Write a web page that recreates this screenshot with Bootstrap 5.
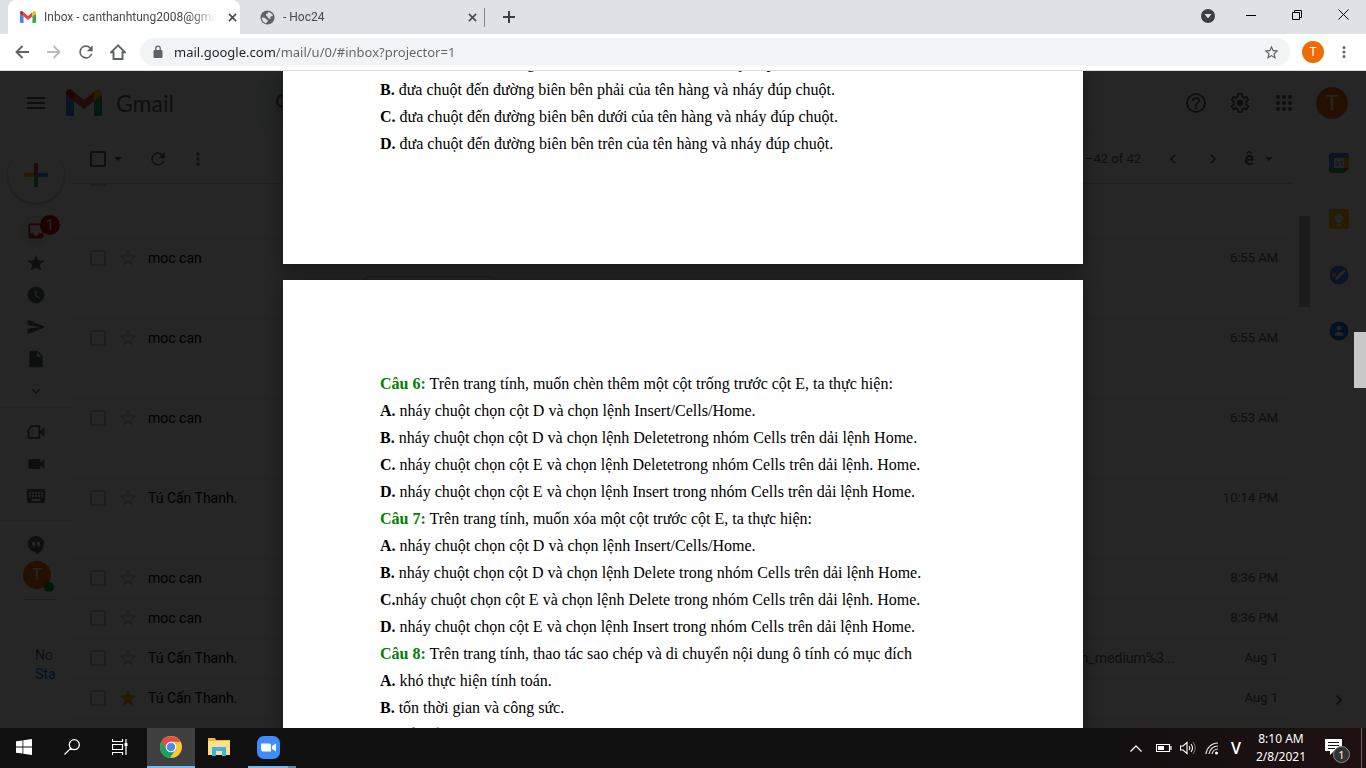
<!DOCTYPE html>
<html lang="vi">
<head>
<meta charset="utf-8">
<meta name="viewport" content="width=device-width, initial-scale=1">
<title>Inbox - Gmail</title>
<link rel="stylesheet" href="https://cdn.jsdelivr.net/npm/bootstrap@5.3.0/dist/css/bootstrap.min.css">
<style>
  body { font-family: "Open Sans", "Noto Sans", sans-serif; font-size: 12px; line-height: 16px; color: #202124; }
  button { border: 0; background: none; padding: 0; color: inherit; }
  svg { display: block; flex: none; }
  .icon-cell { display: flex; align-items: center; justify-content: center; flex: none; width: 32px; height: 32px; }

  /* browser frame */
  .tab-strip { height: 34px; background: #dee1e6; padding-left: 8px; }
  .browser-tab { width: 232px; padding: 0 0 0 12px; gap: 8px; color: #45494d; font-family: Roboto, sans-serif; }
  .browser-tab.is-open { background: #fff; border-radius: 8px 8px 0 0; }
  .tab-title { flex: 1; min-width: 0; overflow: hidden; white-space: nowrap; -webkit-mask-image: linear-gradient(to right, #000 85%, transparent); }
  .tab-close { width: 16px; height: 16px; display: grid; place-items: center; }
  .tab-rule { width: 1px; height: 19px; background: #80868b; }
  .window-btn { width: 46px; height: 29px; display: grid; place-items: center; }
  .tool-row { height: 37px; padding: 0 6px; border-bottom: 1px solid #dadce0; background: #fff; color: #5f6368; }
  .omnibox { height: 28px; background: #f1f3f4; border-radius: 14px; padding: 0 10px; margin: 0 12px 0 6px; }
  .omnibox input { border: 0; outline: 0; padding: 0; font-size: 13px; font-family: "Noto Sans", sans-serif; color: #5f6368;
    background: linear-gradient(to right, #202124 102px, #5f6368 102px); -webkit-background-clip: text; -webkit-text-fill-color: transparent; }
  .user-dot { display: grid; place-items: center; flex: none; border-radius: 50%; background: #ef6c00; color: #fff; font-family: Roboto, sans-serif; }
  .dot-small { width: 22px; height: 22px; }
  .dot-large { width: 32px; height: 32px; font-size: 20px; }

  /* mail behind the viewer */
  .mail { font-family: Roboto, sans-serif; background: #fff; color: #5f6368; }
  .mail-head { height: 64px; border-bottom: 1px solid #eceff1; padding-right: 18px; }
  .menu-cell { width: 72px; height: 48px; display: grid; place-items: center; flex: none; }
  .mail-brand { width: 190px; margin-left: -6px; gap: 14px; flex: none; }
  .wordmark { font-family: Lato, sans-serif; font-size: 23px; line-height: 32px; color: #5f6368; }
  .mail-search { width: 720px; height: 48px; border-radius: 8px; background: #f1f3f4; padding-left: 20px; }
  .mail-search input { border: 0; background: none; }
  .mail-side { width: 72px; flex: none; }
  .compose { width: 56px; height: 56px; margin: 12px 8px; border-radius: 50%; display: grid; place-items: center; box-shadow: 0 1px 3px rgba(60,64,67,.5); }
  .side-item { width: 72px; height: 32px; display: grid; place-items: center; }
  .side-item.is-open span:first-child { width: 32px; height: 32px; border-radius: 50%; background: #fce8e6; display: grid; place-items: center; color: #c5221f; }
  .count-dot { left: 40px; top: 0; width: 20px; height: 20px; border-radius: 50%; background: #c5100c; color: #fff; font-size: 14px; line-height: 20px; }
  .side-rule { border-top: 1px solid #e8eaed; margin-bottom: 8px; }
  .chat-user { width: 28px; height: 28px; margin-left: 23px; font-size: 16px; }
  .chat-dot { right: -3px; bottom: -3px; width: 10px; height: 10px; border-radius: 50%; background: #18a010; }
  .chat-rule { border-top: 1px solid #c4c7c9; margin: 10px 16px 0 23px; }
  .chat-note { margin: 46px 16px 0 35px; font-size: 14px; line-height: 19px; overflow: hidden; white-space: nowrap; }
  .list-tools { height: 48px; padding: 0 20px 0 18px; font-size: 13px; }
  .ime-btn { font-size: 18px; font-weight: 700; }
  .mail .form-check-input { width: 16px; height: 16px; margin: 0; border: 2px solid #c7c7c7; border-radius: 2px; background: none; flex: none; }
  .mail .list-tools .form-check-input { border-color: #5f6368; }
  .mail-rows { flex: 1; overflow: hidden; border-top: 1px solid #cfd8dc; }
  .mail-rows ul { margin: -25px 0 0; }
  .mail-row { height: 40px; padding: 11px 15px 0 18px; border-bottom: 1px solid #e6eaea; background: #f8faf9; font-size: 14px; line-height: 16px; }
  .mail-row.is-tall { height: 80px; }
  .mail-row svg { margin: -2px 0 0 12px; color: #c7c7c7; }
  .mail-row svg.is-starred { color: #f4b400; }
  .mail-row .sender { width: 209px; color: #000; margin-left: 10px; }
  .mail-row time { width: 103px; text-align: right; font-size: 13px; flex: none; }
  .file-chip { width: 147px; height: 32px; margin-top: 10px; border: 1px solid #bdc1c6; border-radius: 16px; }
  .mail-thumb { width: 11px; height: 91px; margin: 81px 0 0 6px; background: #b8b8b8; flex: none; }
  .app-rail { width: 56px; flex: none; border-left: 1px solid #eceff1; }
  .app-rail button { width: 56px; height: 56px; display: grid; place-items: center; }

  /* document viewer */
  .scrim { background: rgba(0,0,0,.85); }
  .sheet { width: 800px; max-width: 100%; background: #fff; color: #000; padding: 0 97px; font-family: "Liberation Serif", serif; font-size: 16px; line-height: 27px; box-shadow: 0 4px 15px 2px rgba(0,0,0,.35); }
  .sheet p { margin: 0; white-space: nowrap; }
  .sheet-first { height: 193px; flex: none; padding-bottom: 107px; overflow: hidden; display: flex; flex-direction: column; justify-content: flex-end; }
  .sheet-next { margin-top: 16px; padding-top: 90px; flex: 1; min-height: 0; overflow: hidden; }
  .ask { color: #008000; }
  .viewer-thumb { right: 0; top: 261px; width: 12px; height: 56px; background: #c8c8c8; }

  /* desktop taskbar */
  .taskbar { height: 40px; background: linear-gradient(to right, #101010 80%, #1f1012); color: #fff; flex: none; }
  .task { width: 48px; height: 40px; display: grid; place-items: center; border-bottom: 2px solid transparent; }
  .task-open { background: #404040; border-color: #76b9ed; margin-left: 3px; }
  .task-running { border-color: #76b9ed; width: 40px; margin-left: 5px; }
  .task-more { width: 8px; height: 40px; border-bottom: 2px solid #5b8bb2; }
  .ime-mark { font-size: 16px; font-weight: 600; }
  .clock { font-size: 12px; line-height: 18px; width: 56px; font-family: "Noto Sans", sans-serif; }
  .desk-edge { width: 5px; height: 40px; border-left: 1px solid #6b6062; }
  .notice-count { left: 24px; top: 18px; width: 17px; height: 17px; border: 1px solid #8a8a8a; border-radius: 50%; background: #333; font-size: 11px; line-height: 15px; }
</style>
<script src="https://cdn.jsdelivr.net/npm/bootstrap@5.3.0/dist/js/bootstrap.bundle.min.js"></script>
</head>
<body class="vh-100 d-flex flex-column overflow-hidden">

<svg width="0" height="0" class="position-absolute" aria-hidden="true">
  <defs>
    <symbol id="gmail" viewBox="0 0 36 27"><path fill="#4285f4" d="M0 6l8 5v16H2.500a2.500 2.500 0 0 1-2.500-2.500z"/><path fill="#34a853" d="M36 6l-8 5v16h5.500a2.500 2.500 0 0 0 2.500-2.500z"/><path fill="#ea4335" d="M8 3l10 8 10-8v9l-10 8-10-8z"/><path fill="#c5221f" d="M0 4C0 0 4-1 6.500 1.500L8 3v9L0 6z"/><path fill="#fbbc04" d="M36 4c0-4-4-5-6.500-2.500L28 3v9l8-6z"/></symbol>
    <symbol id="cross" viewBox="0 0 10 10"><path d="M1 1l8 8M9 1L1 9" stroke="currentColor" stroke-width="1.700"/></symbol>
    <symbol id="dots" viewBox="0 0 24 24"><path fill="currentColor" d="M12 8a2 2 0 1 0 0-4 2 2 0 0 0 0 4zm0 2a2 2 0 1 0 0 4 2 2 0 0 0 0-4zm0 6a2 2 0 1 0 0 4 2 2 0 0 0 0-4z"/></symbol>
    <symbol id="reload" viewBox="0 0 24 24"><path fill="currentColor" d="M17.650 6.350A8 8 0 1 0 19.730 14h-2.080A6 6 0 1 1 12 6c1.660 0 3.140.69 4.220 1.780L13 11h7V4z"/></symbol>
    <symbol id="star-line" viewBox="0 0 24 24"><path fill="currentColor" d="M22 9.240l-7.190-.62L12 2 9.190 8.630 2 9.240l5.460 4.730L5.820 21 12 17.270 18.180 21l-1.630-7.030zM12 15.400l-3.760 2.270 1-4.280-3.320-2.880 4.380-.38L12 6.100l1.710 4.040 4.380.38-3.320 2.880 1 4.280z"/></symbol>
    <symbol id="star-full" viewBox="0 0 24 24"><path fill="currentColor" d="M12 17.270L18.180 21l-1.640-7.030L22 9.240l-7.190-.61L12 2 9.190 8.630 2 9.240l5.460 4.730L5.820 21z"/></symbol>
    <symbol id="caret" viewBox="0 0 8 4"><path fill="currentColor" d="M0 0h8L4 4z"/></symbol>
    <symbol id="right" viewBox="0 0 24 24"><path fill="currentColor" d="M10 6L8.590 7.410 13.170 12l-4.580 4.590L10 18l6-6z"/></symbol>
    <symbol id="left" viewBox="0 0 24 24"><path fill="currentColor" d="M15.410 7.410L14 6l-6 6 6 6 1.410-1.410L10.830 12z"/></symbol>
  </defs>
</svg>

<header class="flex-shrink-0">
  <div class="tab-strip d-flex align-items-stretch">
    <div class="browser-tab is-open d-flex align-items-center">
      <svg width="16" height="12"><use href="#gmail"/></svg>
      <span class="tab-title">Inbox - canthanhtung2008@gma</span>
      <button class="tab-close" aria-label="Close tab"><svg width="9" height="9"><use href="#cross"/></svg></button>
    </div>
    <div class="browser-tab d-flex align-items-center ms-2 ps-2">
      <svg class="ms-1" width="15" height="15" viewBox="0 0 16 16"><circle cx="8" cy="8" r="7.500" fill="#5f6368"/><path fill="#dee1e6" d="M2 8c1.500 0 4 .2 4.500 1.500s2 .5 1.800 2-1.300 1.200-1.800 2.800C3.500 13.600 2 11 2 8zM9 2c2 .3 4 1.800 4.800 4-.8 1-2 .2-2.500 1-1 1.200.7 1.600 0 2.200-1.200.8-3-.8-3.300-1.700C7.700 6 6.300 6 6.200 5c0-1.200 2-.8 2.300-1.500S8.300 2.300 9 2z"/></svg>
      <span class="tab-title">- Hoc24</span>
      <button class="tab-close" aria-label="Close tab"><svg width="9" height="9"><use href="#cross"/></svg></button>
    </div>
    <span class="tab-rule align-self-center ms-1"></span>
    <button class="icon-cell align-self-center ms-2" aria-label="New tab"><svg width="12" height="12" viewBox="0 0 12 12"><path d="M6 0v12M0 6h12" stroke="#3c4043" stroke-width="2"/></svg></button>
    <div class="ms-auto d-flex">
      <button class="icon-cell me-1" aria-label="Search tabs"><svg width="14" height="14" viewBox="0 0 14 14"><circle cx="7" cy="7" r="7" fill="#3c4043"/><path fill="#dee1e6" d="M3.500 5h7L7 9.500z"/></svg></button>
      <button class="window-btn" aria-label="Minimize"><svg width="10" height="10"><path d="M0 5.500h10" stroke="#000"/></svg></button>
      <button class="window-btn" aria-label="Restore"><svg width="10" height="10" viewBox="0 0 10 10"><path d="M.5 2.500h7v7h-7zM2.500 2.500v-2h7v7h-2" fill="none" stroke="#000"/></svg></button>
      <button class="window-btn" aria-label="Close"><svg width="11" height="11" viewBox="0 0 11 11"><path d="M.5.500l10 10M10.500.500l-10 10" stroke="#000"/></svg></button>
    </div>
  </div>
  <div class="tool-row d-flex align-items-center">
    <button class="icon-cell" aria-label="Back"><svg width="14" height="14" viewBox="0 0 14 14"><path d="M14 7H2M7.500 1L1.500 7l6 6" fill="none" stroke="currentColor" stroke-width="1.900"/></svg></button>
    <button class="icon-cell" aria-label="Forward"><svg width="14" height="14" viewBox="0 0 14 14"><path d="M0 7h12M6.500 1l6 6-6 6" fill="none" stroke="#bababa" stroke-width="1.900"/></svg></button>
    <button class="icon-cell" aria-label="Reload"><svg width="20" height="20"><use href="#reload"/></svg></button>
    <button class="icon-cell" aria-label="Home"><svg width="16" height="16" viewBox="0 0 16 16"><path d="M8 1.300L1 8.300h2.500V15h9V8.300H15z" fill="none" stroke="currentColor" stroke-width="1.900"/></svg></button>
    <div class="omnibox d-flex align-items-center flex-grow-1">
      <svg width="16" height="14" viewBox="0 0 16 14"><path fill="#5f6368" d="M4.500 5h7a1 1 0 0 1 1 1v6a1 1 0 0 1-1 1h-7a1 1 0 0 1-1-1V6a1 1 0 0 1 1-1z"/><path d="M5.800 5.500V3.300a2.200 2.200 0 0 1 4.400 0v2.200" fill="none" stroke="#5f6368" stroke-width="1.300"/></svg>
      <input class="flex-grow-1 ms-2" type="text" aria-label="Address" value="mail.google.com/mail/u/0/#inbox?projector=1">
      <svg width="17" height="17"><use href="#star-line"/></svg>
    </div>
    <button class="user-dot dot-small" aria-label="Profile">T</button>
    <button class="icon-cell ms-1" aria-label="Menu"><svg width="18" height="18"><use href="#dots"/></svg></button>
  </div>
</header>

<main class="position-relative flex-grow-1 overflow-hidden d-flex flex-column">
  <div class="mail flex-grow-1 d-flex flex-column overflow-hidden">
    <div class="mail-head d-flex align-items-center">
      <button class="menu-cell" aria-label="Main menu"><svg width="18" height="12" viewBox="0 0 18 12"><path d="M0 1h18M0 6h18M0 11h18" stroke="currentColor" stroke-width="2"/></svg></button>
      <a class="mail-brand d-flex align-items-center text-decoration-none" href="#"><svg width="36" height="27"><use href="#gmail"/></svg><span class="wordmark">Gmail</span></a>
      <div class="mail-search d-flex align-items-center">
        <svg width="18" height="18" viewBox="0 0 18 18"><path d="M11.500 11.500L17 17M13 7A6 6 0 1 1 1 7a6 6 0 0 1 12 0z" fill="none" stroke="currentColor" stroke-width="2"/></svg>
        <input class="flex-grow-1" type="search" aria-label="Search mail">
      </div>
      <div class="d-flex align-items-center ms-auto">
        <button class="icon-cell me-2" aria-label="Help"><svg width="24" height="24" viewBox="0 0 24 24"><path fill="currentColor" d="M11 18h2v-2h-2zm1-16a10 10 0 1 0 0 20 10 10 0 0 0 0-20zm0 18a8 8 0 1 1 0-16 8 8 0 0 1 0 16zm0-14a4 4 0 0 0-4 4h2a2 2 0 1 1 4 0c0 2-3 1.750-3 5h2c0-2.250 3-2.500 3-5a4 4 0 0 0-4-4z"/></svg></button>
        <button class="icon-cell ms-1 me-2" aria-label="Settings"><svg width="24" height="24" viewBox="0 0 24 24"><path d="M10.200 3h3.600l.5 2.600 1.700 1 2.500-.9 1.800 3.100-2 1.800v2.800l2 1.800-1.800 3.100-2.500-.9-1.700 1-.5 2.600h-3.600l-.5-2.600-1.700-1-2.500.9-1.800-3.100 2-1.800v-2.800l-2-1.800 1.800-3.100 2.500.9 1.700-1z" fill="none" stroke="currentColor" stroke-width="2"/><circle cx="12" cy="12" r="3.300" fill="currentColor"/></svg></button>
        <button class="icon-cell ms-1 me-3" aria-label="Apps"><svg width="16" height="16" viewBox="0 0 16 16" fill="currentColor"><circle cx="2" cy="2" r="2"/><circle cx="8" cy="2" r="2"/><circle cx="14" cy="2" r="2"/><circle cx="2" cy="8" r="2"/><circle cx="8" cy="8" r="2"/><circle cx="14" cy="8" r="2"/><circle cx="2" cy="14" r="2"/><circle cx="8" cy="14" r="2"/><circle cx="14" cy="14" r="2"/></svg></button>
        <button class="user-dot dot-large" aria-label="Account">T</button>
      </div>
    </div>
    <div class="d-flex flex-grow-1 overflow-hidden">
      <nav class="mail-side" aria-label="Mail folders">
        <button class="compose" aria-label="Compose"><svg width="24" height="24" viewBox="0 0 24 24"><path fill="#ea4335" d="M10 0h4v10l-4 4z"/><path fill="#fbbc04" d="M0 10h10v4H0z"/><path fill="#34a853" d="M10 14l4-4v14h-4z"/><path fill="#4285f4" d="M14 10h10v4H12z"/></svg></button>
        <button class="side-item is-open position-relative" aria-label="Inbox"><span><svg width="20" height="20" viewBox="0 0 24 24"><path fill="currentColor" d="M19 3H5a2 2 0 0 0-2 2v14c0 1.100.9 2 2 2h14a2 2 0 0 0 2-2V5a2 2 0 0 0-2-2zm0 12h-4a3 3 0 0 1-6 0H5V5h14z"/></svg></span><span class="count-dot position-absolute">1</span></button>
        <button class="side-item" aria-label="Starred"><svg width="20" height="20"><use href="#star-full"/></svg></button>
        <button class="side-item" aria-label="Snoozed"><svg width="20" height="20" viewBox="0 0 24 24"><path fill="currentColor" fill-rule="evenodd" d="M12 2a10 10 0 1 0 0 20 10 10 0 0 0 0-20zm4.200 14.200L11 13V7h1.500v5.200l4.500 2.700z"/></svg></button>
        <button class="side-item" aria-label="Sent"><svg width="20" height="20" viewBox="0 0 24 24"><path fill="currentColor" d="M2 21l21-9L2 3v7l15 2-15 2z"/></svg></button>
        <button class="side-item" aria-label="Drafts"><svg width="20" height="20" viewBox="0 0 24 24"><path fill="currentColor" d="M6 2a2 2 0 0 0-2 2v16c0 1.100.9 2 2 2h12a2 2 0 0 0 2-2V8l-6-6zm7 7V3.500L18.500 9z"/></svg></button>
        <button class="side-item" aria-label="More"><svg width="18" height="18" viewBox="0 0 24 24"><path fill="currentColor" d="M7.400 8.600L12 13.200l4.600-4.600L18 10l-6 6-6-6z"/></svg></button>
        <div class="side-rule"></div>
        <button class="side-item" aria-label="New meeting"><svg width="20" height="20" viewBox="0 0 24 24"><path d="M7 5h9v14H3V9z" fill="none" stroke="currentColor" stroke-width="2"/><path fill="currentColor" d="M17 11l5-5v12l-5-5z"/></svg></button>
        <button class="side-item" aria-label="Join a meeting"><svg width="20" height="20" viewBox="0 0 24 24"><path fill="currentColor" d="M17 10.500V7a1 1 0 0 0-1-1H3v12h13a1 1 0 0 0 1-1v-3.500l5 4v-11z"/></svg></button>
        <button class="side-item" aria-label="Keyboard"><svg width="20" height="16" viewBox="0 0 20 16"><path fill="currentColor" d="M2 1h16a1 1 0 0 1 1 1v12a1 1 0 0 1-1 1H2a1 1 0 0 1-1-1V2a1 1 0 0 1 1-1z"/><path d="M3 5h14M3 8h14" stroke="#fff" stroke-width="2" stroke-dasharray="2 1"/><path d="M6 12h8" stroke="#fff" stroke-width="2"/></svg></button>
        <div class="side-rule mt-2"></div>
        <button class="side-item" aria-label="Hangouts"><svg width="20" height="20" viewBox="0 0 20 20"><path fill="currentColor" d="M10 1a8 8 0 0 0 0 16v3c3-1.500 8-6 8-11a8 8 0 0 0-8-8z"/><path fill="#fff" d="M6 7h3v3l-1 2H7v-2H6zm5 0h3v3l-1 2h-1v-2h-1z"/></svg></button>
        <button class="chat-user user-dot position-relative" aria-label="Chat account">T<span class="chat-dot position-absolute"></span></button>
        <div class="chat-rule"></div>
        <div class="chat-note"><div>No</div><a class="text-decoration-none" href="#">Star</a></div>
      </nav>

      <section class="flex-grow-1 d-flex flex-column overflow-hidden">
        <div class="list-tools d-flex align-items-center">
          <input class="form-check-input" type="checkbox" aria-label="Select all">
          <svg class="ms-2" width="8" height="4"><use href="#caret"/></svg>
          <button class="icon-cell ms-3 me-2 ps-2" aria-label="Refresh"><svg width="20" height="20"><use href="#reload"/></svg></button>
          <button class="icon-cell ms-1" aria-label="More actions"><svg width="20" height="20"><use href="#dots"/></svg></button>
          <span class="ms-auto me-3">1–42 of 42</span>
          <button class="icon-cell me-2" aria-label="Newer"><svg width="20" height="20"><use href="#left"/></svg></button>
          <button class="icon-cell me-1" aria-label="Older"><svg width="20" height="20"><use href="#right"/></svg></button>
          <button class="icon-cell ime-btn" aria-label="Input tools">ê</button>
          <svg width="8" height="4"><use href="#caret"/></svg>
        </div>
        <div class="mail-rows">
          <ul class="list-unstyled">
            <li class="mail-row is-tall d-flex"><input class="form-check-input" type="checkbox" aria-label="Select message"><svg width="20" height="20"><use href="#star-line"/></svg></li>
            <li class="mail-row is-tall d-flex"><input class="form-check-input" type="checkbox" aria-label="Select message"><svg width="20" height="20"><use href="#star-line"/></svg><span class="sender">moc can</span><span class="flex-grow-1"><span class="d-block">&nbsp;</span><span class="file-chip d-block"></span></span><time>6:55 AM</time></li>
            <li class="mail-row is-tall d-flex"><input class="form-check-input" type="checkbox" aria-label="Select message"><svg width="20" height="20"><use href="#star-line"/></svg><span class="sender">moc can</span><span class="flex-grow-1"></span><time>6:55 AM</time></li>
            <li class="mail-row is-tall d-flex"><input class="form-check-input" type="checkbox" aria-label="Select message"><svg width="20" height="20"><use href="#star-line"/></svg><span class="sender">moc can</span><span class="flex-grow-1"></span><time>6:53 AM</time></li>
            <li class="mail-row is-tall d-flex"><input class="form-check-input" type="checkbox" aria-label="Select message"><svg width="20" height="20"><use href="#star-line"/></svg><span class="sender">Tú Cấn Thanh.</span><span class="flex-grow-1"></span><time>10:14 PM</time></li>
            <li class="mail-row d-flex"><input class="form-check-input" type="checkbox" aria-label="Select message"><svg width="20" height="20"><use href="#star-line"/></svg><span class="sender">moc can</span><span class="flex-grow-1"></span><time>8:36 PM</time></li>
            <li class="mail-row d-flex"><input class="form-check-input" type="checkbox" aria-label="Select message"><svg width="20" height="20"><use href="#star-line"/></svg><span class="sender">moc can</span><span class="flex-grow-1"></span><time>8:36 PM</time></li>
            <li class="mail-row d-flex"><input class="form-check-input" type="checkbox" aria-label="Select message"><svg width="20" height="20"><use href="#star-line"/></svg><span class="sender">Tú Cấn Thanh.</span><span class="flex-grow-1 text-end">utm_medium%3...</span><time>Aug 1</time></li>
            <li class="mail-row d-flex"><input class="form-check-input" type="checkbox" aria-label="Select message"><svg class="is-starred" width="20" height="20"><use href="#star-full"/></svg><span class="sender">Tú Cấn Thanh.</span><span class="flex-grow-1"></span><time>Aug 1</time></li>
          </ul>
        </div>
      </section>
      <div class="mail-thumb"></div>
      <aside class="app-rail d-flex flex-column">
        <button aria-label="Calendar"><svg width="20" height="20" viewBox="0 0 20 20"><path fill="#4285f4" d="M0 2a2 2 0 0 1 2-2h16a2 2 0 0 1 2 2v3H5v11H0z"/><path fill="#fbbc04" d="M15 5h5v11h-5z"/><path fill="#34a853" d="M0 15h15v5H2a2 2 0 0 1-2-2z"/><path fill="#ea4335" d="M15 15h5l-5 5z"/><path fill="#fff" d="M5 5h10v10H5z"/><text x="10" y="13" font-size="8" font-weight="700" fill="#4285f4" text-anchor="middle">31</text></svg></button>
        <button aria-label="Keep"><svg width="20" height="20" viewBox="0 0 20 20"><rect width="20" height="20" rx="2" fill="#fbbc04"/><path fill="#fff" d="M10 5a4 4 0 0 0-2 7.500V14h4v-1.500A4 4 0 0 0 10 5zM8 15h4v1.500H8z"/></svg></button>
        <button aria-label="Tasks"><svg width="20" height="20" viewBox="0 0 20 20"><circle cx="10" cy="10" r="9.500" fill="#4285f4"/><path d="M8 13l7-7" stroke="#fff" stroke-width="3" stroke-linecap="round"/><circle cx="5" cy="10" r="2.200" fill="#fbbc04"/></svg></button>
        <button aria-label="Contacts"><svg width="20" height="20" viewBox="0 0 20 20"><circle cx="10" cy="10" r="9.500" fill="#1a73e8"/><circle cx="10" cy="7" r="2.300" fill="#fff"/><path fill="#fff" d="M5.500 14.500c0-5 9-5 9 0z"/></svg></button>
        <button class="mt-auto" aria-label="Hide panel"><svg width="20" height="20"><use href="#right"/></svg></button>
      </aside>
    </div>
  </div>

  <div class="scrim position-absolute top-0 start-0 w-100 h-100 d-flex flex-column align-items-center">
    <article class="sheet sheet-first">
      <p><b>A.</b> đưa chuột đến đường biên bên trái của tên cột và nháy đúp chuột.</p>
      <p><b>B.</b> đưa chuột đến đường biên bên phải của tên hàng và nháy đúp chuột.</p>
      <p><b>C.</b> đưa chuột đến đường biên bên dưới của tên hàng và nháy đúp chuột.</p>
      <p><b>D.</b> đưa chuột đến đường biên bên trên của tên hàng và nháy đúp chuột.</p>
    </article>
    <article class="sheet sheet-next">
      <p><b class="ask">Câu 6:</b> Trên trang tính, muốn chèn thêm một cột trống trước cột E, ta thực hiện:</p>
      <p><b>A.</b> nháy chuột chọn cột D và chọn lệnh Insert/Cells/Home.</p>
      <p><b>B.</b> nháy chuột chọn cột D và chọn lệnh Deletetrong nhóm Cells trên dải lệnh Home.</p>
      <p><b>C.</b> nháy chuột chọn cột E và chọn lệnh Deletetrong nhóm Cells trên dải lệnh. Home.</p>
      <p><b>D.</b> nháy chuột chọn cột E và chọn lệnh Insert trong nhóm Cells trên dải lệnh Home.</p>
      <p><b class="ask">Câu 7:</b> Trên trang tính, muốn xóa một cột trước cột E, ta thực hiện:</p>
      <p><b>A.</b> nháy chuột chọn cột D và chọn lệnh Insert/Cells/Home.</p>
      <p><b>B.</b> nháy chuột chọn cột D và chọn lệnh Delete trong nhóm Cells trên dải lệnh Home.</p>
      <p><b>C.</b>nháy chuột chọn cột E và chọn lệnh Delete trong nhóm Cells trên dải lệnh. Home.</p>
      <p><b>D.</b> nháy chuột chọn cột E và chọn lệnh Insert trong nhóm Cells trên dải lệnh Home.</p>
      <p><b class="ask">Câu 8:</b> Trên trang tính, thao tác sao chép và di chuyển nội dung ô tính có mục đích</p>
      <p><b>A.</b> khó thực hiện tính toán.</p>
      <p><b>B.</b> tốn thời gian và công sức.</p>
      <p><b>C.</b> để mất</p>
    </article>
    <div class="viewer-thumb position-absolute"></div>
  </div>
</main>

<footer class="taskbar d-flex align-items-center">
  <button class="task" aria-label="Start"><svg width="16" height="16" viewBox="0 0 16 16"><path fill="#fff" d="M0 2.300L6.500 1.400v6.200H0zM7.300 1.300L16 0v7.600H7.300zM0 8.400h6.500v6.200L0 13.700zM7.300 8.400H16V16l-8.700-1.300z"/></svg></button>
  <button class="task" aria-label="Search"><svg width="16" height="16" viewBox="0 0 16 16"><path d="M6.800 9.200L.5 15.500M15.300 5.700a5 5 0 1 1-10 0 5 5 0 0 1 10 0z" fill="none" stroke="#fff" stroke-width="1.300"/></svg></button>
  <button class="task" aria-label="Task view"><svg width="16" height="16" viewBox="0 0 16 16"><path d="M.5 0v2.500h10V0M.5 5.500h10v5H.5zM.5 16v-2.500h10V16M14 0v16" fill="none" stroke="#fff" stroke-width="1.200"/><path fill="#fff" d="M12.500 4h3v3h-3z"/></svg></button>
  <button class="task task-open" aria-label="Chrome"><svg width="24" height="24" viewBox="0 0 24 24"><circle cx="12" cy="12" r="11" fill="#fbc934"/><path fill="#1aa260" d="M12 12L2.500 6.500A11 11 0 0 0 11 23l5.500-8.500z"/><path fill="#de5246" d="M12 12L7.200 14.500 2.500 6.500A11 11 0 0 1 21.500 6.700H12z"/><circle cx="12" cy="12" r="5.300" fill="#fff"/><circle cx="12" cy="12" r="4.200" fill="#4a8af4"/></svg></button>
  <button class="task" aria-label="File Explorer"><svg width="22" height="20" viewBox="0 0 22 20"><path fill="#f5b82e" d="M0 1h7l1 2h14v4H0z"/><path fill="#ffe08a" d="M0 4h22v14H0z"/><path fill="#3db2e8" d="M4 10h14v9h-4v-5H8v5H4z"/></svg></button>
  <button class="task task-running" aria-label="Zoom"><svg width="23" height="23" viewBox="0 0 23 23"><rect width="23" height="23" rx="7" fill="#3f8cff"/><path fill="#fff" d="M4 7.500h8a2 2 0 0 1 2 2v6H6a2 2 0 0 1-2-2zM15 10l4-2.500v8L15 13z"/></svg></button>
  <span class="task-more"></span>
  <div class="ms-auto d-flex align-items-center">
    <button class="icon-cell me-n2" aria-label="Hidden icons"><svg width="12" height="7" viewBox="0 0 12 7"><path d="M.5 6.500L6 1l5.500 5.500" fill="none" stroke="#fff" stroke-width="1.300"/></svg></button>
    <svg class="ms-1 me-2" width="16" height="10" viewBox="0 0 16 10"><path d="M.5 1.500h13v7H.5zM15 3v4" fill="none" stroke="#fff" stroke-width="1.200"/><path fill="#fff" d="M2 3h6v4H2z"/></svg>
    <svg class="me-2" width="17" height="14" viewBox="0 0 17 14"><path d="M.5 5v4H3l4 3.500v-11L3 5zM9 5q1.500 2 0 4M11 3q3 4 0 8" fill="none" stroke="#fff" stroke-width="1.100"/><path d="M13 1q4.500 6 0 12" fill="none" stroke="#777"/></svg>
    <svg class="me-2" width="14" height="14" viewBox="0 0 14 14"><path d="M1 13A12 12 0 0 1 13 2M4 13a9 9 0 0 1 9-8M7 13a6 6 0 0 1 6-5" fill="none" stroke="#ddd" stroke-width="1.200"/><circle cx="11.500" cy="12" r="1.500" fill="#fff"/></svg>
    <span class="ime-mark px-1 me-1">V</span>
    <time class="clock text-center ms-1"><span class="d-block">8:10 AM</span><span class="d-block">2/8/2021</span></time>
    <button class="task position-relative me-1" aria-label="Notifications"><svg width="17" height="16" viewBox="0 0 17 16"><path fill="#fff" d="M0 0h17v12h-8l-4 4v-4H0z"/><path d="M3 3.500h11M3 6.500h11M3 9.500h7" stroke="#1c1012"/></svg><span class="notice-count position-absolute">1</span></button>
    <span class="desk-edge"></span>
  </div>
</footer>
</body>
</html>
